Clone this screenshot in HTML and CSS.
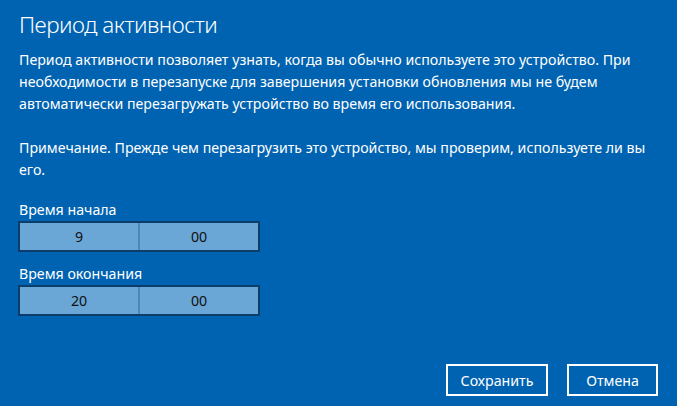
FILE: index.html
```html
<!DOCTYPE html>
<html lang="ru">
  <head>
    <title>Период активности</title>
    <link rel="stylesheet" href="styles.css">
  </head>
  <body>
    <div class="dialog">
      <h1 class="title">Период активности</h1>
      <p class="text">Период активности позволяет узнать, когда вы обычно используете это устройство. При необходимости в перезапуске для завершения установки обновления мы не будем автоматически перезагружать устройство во время его использования.</p>
      <p class="text note">Примечание. Прежде чем перезагрузить это устройство, мы проверим, используете ли вы его.</p>

      <div class="field">
        <div class="label">Время начала</div>
        <div class="time">
          <div class="cell">9</div>
          <div class="cell">00</div>
        </div>
      </div>
      <div class="field">
        <div class="label">Время окончания</div>
        <div class="time">
          <div class="cell">20</div>
          <div class="cell">00</div>
        </div>
      </div>

      <div class="buttons">
        <button type="button" class="btn save">Сохранить</button>
        <button type="button" class="btn cancel">Отмена</button>
      </div>
    </div>
  </body>
</html>
```

FILE: styles.css
```css
html,
body {
    margin: 0;
    padding: 0;
    height: 100%;
  }

  body {
    background-color: #0063b1;
    color: #fff;
    font-family: "Noto Sans", Arial, sans-serif;
  }

  .dialog {
    padding: 8px 19px 0 19px;
    height: 398px;
    display: flex;
    flex-direction: column;
  }

  .title {
    font-size: 22.5px;
    font-weight: 300;
    letter-spacing: -0.5px;
    margin: 0;
    line-height: 34px;
  }

  .text {
    font-size: 14.2px;
    line-height: 22px;
    margin: 7px 0 0 0;
  }

  .note {
    margin-top: 22px;
  }

  .field:first-of-type {
    margin-top: 11px;
  }

  .label {
    font-size: 14.2px;
    line-height: 22px;
    margin-top: 11px;
  }

  .field:first-of-type .label {
    margin-top: 7px;
  }

  .time {
    display: flex;
    width: 238px;
    height: 27px;
    margin-left: -1px;
    border: 2px solid #0b3e6a;
    background-color: #6aa6d6;
    color: #111;
  }

  .cell {
    flex: 1;
    text-align: center;
    font-size: 14.2px;
    line-height: 27px;
  }

  .cell + .cell {
    border-left: 2px solid #4f86b6;
  }

  .buttons {
    margin-top: auto;
    margin-bottom: 10px;
    display: flex;
    justify-content: flex-end;
    gap: 19px;
  }

  .btn {
    height: 32px;
    background: transparent;
    color: #fff;
    border: 2px solid #fff;
    font-family: inherit;
    font-size: 14.2px;
    padding: 0;
  }

  .save {
    width: 102px;
  }

  .cancel {
    width: 91px;
  }
```
